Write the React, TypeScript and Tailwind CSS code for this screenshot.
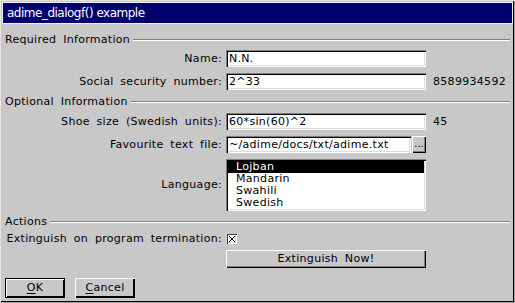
import React from "react";

const sunken =
  "shadow-[inset_1px_1px_0_#808080,inset_2px_2px_0_#000,inset_-1px_-1px_0_#fff,inset_-2px_-2px_0_#dcdcdc]";
const raised =
  "shadow-[inset_1px_1px_0_#fff,inset_-1px_-1px_0_#000,inset_-2px_-2px_0_#808080]";

const Section = ({ title, className = "" }: { title: string; className?: string }) => (
  <div className={`flex items-center h-[12px] ${className}`}>
    <span className="whitespace-nowrap">{title}</span>
    <div className="flex-1 ml-[3px] h-[2px] border-t border-b border-t-[#808080] border-b-white" />
  </div>
);

const Row = ({
  label,
  children,
  extra,
  className = "",
}: {
  label: string;
  children: React.ReactNode;
  extra?: string;
  className?: string;
}) => (
  <div className={`flex items-center ${className}`}>
    <div className="w-[217px] text-right whitespace-nowrap">{label}</div>
    <div className="ml-[4px] w-[200px] flex">{children}</div>
    {extra && <div className="ml-[7px] whitespace-nowrap">{extra}</div>}
  </div>
);

const TextBox = ({ value, width = "w-[200px]" }: { value: string; width?: string }) => (
  <div className={`${width} h-[17px] bg-white ${sunken} pl-[3px] flex items-center whitespace-nowrap overflow-hidden`}>
    {value}
  </div>
);

const languages = ["Lojban", "Mandarin", "Swahili", "Swedish"];

export default function App() {
  return (
    <div className="w-[515px] h-[303px] bg-[#c8c8c8] flex flex-col text-black text-[11px] leading-[12px] font-['DejaVu_Sans',sans-serif] tracking-[0.3px] [word-spacing:3px] shadow-[inset_1px_1px_0_#e4e4e4,inset_-1px_-1px_0_#a0a0a0,inset_-2px_-2px_0_#000]">
      {/* Title bar */}
      <div className="mx-[2px] mt-[2px] h-[22px] border border-[#f0f0f0] bg-[#000070] text-white text-[12px] tracking-[-0.5px] [word-spacing:0px] pl-[4px] flex items-center">
        adime_dialogf() example
      </div>

      <div className="px-[5px] flex flex-col">
        <Section title="Required Information" className="mt-[10px]" />
        <Row label="Name:" className="mt-[4px]">
          <TextBox value="N.N." />
        </Row>
        <Row label="Social security number:" extra="8589934592" className="mt-[6px]">
          <TextBox value="2^33" />
        </Row>

        <Section title="Optional Information" className="mt-[6px]" />
        <Row label="Shoe size (Swedish units):" extra="45" className="mt-[5px]">
          <TextBox value="60*sin(60)^2" />
        </Row>
        <Row label="Favourite text file:" className="mt-[6px]">
          <TextBox value="~/adime/docs/txt/adime.txt" width="w-[185px]" />
          <div className={`ml-[1px] w-[14px] h-[17px] ${raised} flex items-end justify-center pb-[4px] tracking-[0px] text-[10px] leading-none`}>
            ...
          </div>
        </Row>
        <Row label="Language:" className="mt-[6px]">
          <div className={`w-[200px] h-[52px] bg-white ${sunken} py-[2px] pl-[2px] pr-[2px] flex flex-col`}>
            {languages.map((l, i) => (
              <div
                key={l}
                className={`h-[12px] pl-[8px] flex items-center ${i === 0 ? "bg-black text-white" : ""}`}
              >
                {l}
              </div>
            ))}
          </div>
        </Row>

        <Section title="Actions" className="mt-[5px]" />
        <Row label="Extinguish on program termination:" className="mt-[6px] h-[10px]">
          <div className={`ml-[1px] w-[10px] h-[10px] bg-white shadow-[inset_1px_1px_0_#404040,inset_-1px_-1px_0_#fff,inset_-2px_-2px_0_#c8c8c8] flex items-center justify-center`}>
            <svg width="6" height="6" viewBox="0 0 6 6" shapeRendering="crispEdges">
              <path d="M0 0h1v1H0zM5 0h1v1H5zM1 1h1v1H1zM4 1h1v1H4zM2 2h2v2H2zM1 4h1v1H1zM4 4h1v1H4zM0 5h1v1H0zM5 5h1v1H5z" fill="#000" />
            </svg>
          </div>
        </Row>
        <Row label="" className="mt-[6px]">
          <div className={`w-[200px] h-[18px] ${raised} shadow-[inset_1px_1px_0_#fff,inset_-1px_-1px_0_#000,inset_-2px_-2px_0_#000] flex items-center justify-center`}>
            Extinguish Now!
          </div>
        </Row>

        <div className="mt-[10px] flex gap-[10px]">
          <div className="w-[60px] h-[20px] border border-black shadow-[inset_1px_1px_0_#fff,inset_-1px_-1px_0_#000] flex items-center justify-center">
            <span>
              <span className="underline underline-offset-2">O</span>K
            </span>
          </div>
          <div className="w-[60px] h-[20px] shadow-[inset_1px_1px_0_#fff,inset_-1px_-1px_0_#000,inset_-2px_-2px_0_#000] flex items-center justify-center">
            <span>
              <span className="underline underline-offset-2">C</span>ancel
            </span>
          </div>
        </div>
      </div>
    </div>
  );
}
